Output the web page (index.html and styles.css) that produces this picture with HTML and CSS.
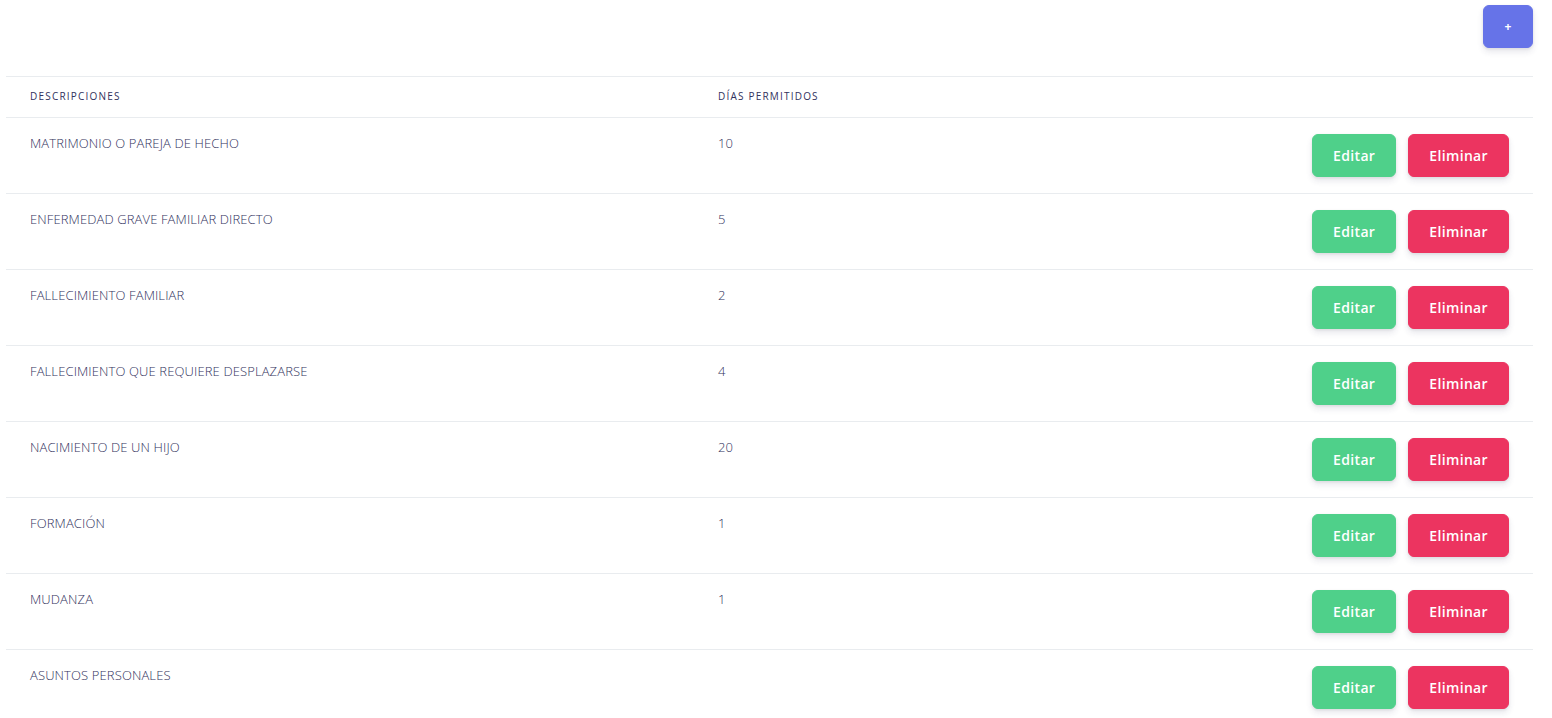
FILE: index.html
```html
<!DOCTYPE html>
<html lang="es">
<head>
<meta charset="utf-8">
<title>Permisos</title>
<link rel="stylesheet" href="styles.css">
</head>
<body>
<div class="page">
  <div class="toolbar">
    <button class="btn btn-primary btn-add">+</button>
  </div>
  <table class="table">
    <colgroup>
      <col class="col-desc">
      <col class="col-days">
      <col class="col-actions">
    </colgroup>
    <thead>
      <tr>
        <th>Descripciones</th>
        <th>Días permitidos</th>
        <th></th>
      </tr>
    </thead>
    <tbody>
      <tr><td>MATRIMONIO O PAREJA DE HECHO</td><td>10</td><td class="actions"><button class="btn btn-success">Editar</button><button class="btn btn-danger">Eliminar</button></td></tr>
      <tr><td>ENFERMEDAD GRAVE FAMILIAR DIRECTO</td><td>5</td><td class="actions"><button class="btn btn-success">Editar</button><button class="btn btn-danger">Eliminar</button></td></tr>
      <tr><td>FALLECIMIENTO FAMILIAR</td><td>2</td><td class="actions"><button class="btn btn-success">Editar</button><button class="btn btn-danger">Eliminar</button></td></tr>
      <tr><td>FALLECIMIENTO QUE REQUIERE DESPLAZARSE</td><td>4</td><td class="actions"><button class="btn btn-success">Editar</button><button class="btn btn-danger">Eliminar</button></td></tr>
      <tr><td>NACIMIENTO DE UN HIJO</td><td>20</td><td class="actions"><button class="btn btn-success">Editar</button><button class="btn btn-danger">Eliminar</button></td></tr>
      <tr><td>FORMACIÓN</td><td>1</td><td class="actions"><button class="btn btn-success">Editar</button><button class="btn btn-danger">Eliminar</button></td></tr>
      <tr><td>MUDANZA</td><td>1</td><td class="actions"><button class="btn btn-success">Editar</button><button class="btn btn-danger">Eliminar</button></td></tr>
      <tr><td>ASUNTOS PERSONALES</td><td></td><td class="actions"><button class="btn btn-success">Editar</button><button class="btn btn-danger">Eliminar</button></td></tr>
    </tbody>
  </table>
</div>
</body>
</html>
```

FILE: styles.css
```css
* { box-sizing: border-box; }
html, body {
  margin: 0;
  background: #fff;
  font-family: "Open Sans", "Liberation Sans", sans-serif;
  color: #32325d;
}
.page {
  padding: 5px 19px 0 6px;
}
.toolbar {
  display: flex;
  justify-content: flex-end;
  height: 71px;
}
.btn {
  font-family: "Open Sans", "Liberation Sans", sans-serif;
  font-size: 14px;
  font-weight: 600;
  line-height: 21px;
  letter-spacing: 0.025em;
  padding: 10px 20px;
  border: 1px solid transparent;
  border-radius: 6px;
  color: #fff;
  cursor: pointer;
  box-shadow: 0 4px 6px rgba(50, 50, 93, 0.11), 0 1px 3px rgba(0, 0, 0, 0.08);
}
.btn-add {
  width: 50px;
  height: 43px;
  padding: 0;
  font-size: 12px;
  font-weight: 700;
}
.btn-primary { background: #6673e8; border-color: #6673e8; }
.btn-success { background: #4fd08a; border-color: #4fd08a; }
.btn-danger { background: #ec3460; border-color: #ec3460; }
.table {
  width: 100%;
  border-collapse: collapse;
}
.col-desc { width: 688px; }
.col-actions { width: 300px; }
.table th {
  text-align: left;
  font-size: 10px;
  font-weight: 400;
  text-transform: uppercase;
  letter-spacing: 1.2px;
  color: #32325d;
  padding: 12px 24px 13px;
  line-height: 15px;
  border-top: 1px solid #e9ecef;
  border-bottom: 1px solid #e9ecef;
}
.table td {
  font-size: 13px;
  font-weight: 300;
  line-height: 19.5px;
  letter-spacing: 0.12px;
  color: #32325d;
  padding: 16px 24px;
  vertical-align: top;
  border-top: 1px solid #e9ecef;
  height: 76px;
}
.table tbody tr:first-child td { border-top: none; }
.table td.actions {
  text-align: right;
  vertical-align: middle;
  padding-top: 0;
  padding-bottom: 0;
  letter-spacing: normal;
}
.actions .btn + .btn { margin-left: 12px; }
```
